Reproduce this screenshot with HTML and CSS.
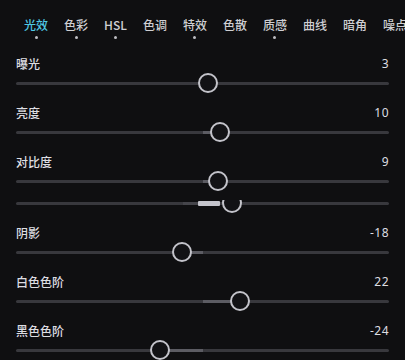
FILE: index.html
```html
<!DOCTYPE html>
<html lang="zh">
<head>
<meta charset="utf-8">
<link rel="stylesheet" href="styles.css">
</head>
<body>
<div class="app">
  <nav class="tabs">
    <div class="tab active"><span class="tab-label">光效</span><span class="dot"></span></div>
    <div class="tab"><span class="tab-label">色彩</span><span class="dot"></span></div>
    <div class="tab"><span class="tab-label">HSL</span><span class="dot"></span></div>
    <div class="tab"><span class="tab-label">色调</span><span class="dot hidden"></span></div>
    <div class="tab"><span class="tab-label">特效</span><span class="dot"></span></div>
    <div class="tab"><span class="tab-label">色散</span><span class="dot hidden"></span></div>
    <div class="tab"><span class="tab-label">质感</span><span class="dot"></span></div>
    <div class="tab"><span class="tab-label">曲线</span><span class="dot hidden"></span></div>
    <div class="tab"><span class="tab-label">暗角</span><span class="dot hidden"></span></div>
    <div class="tab"><span class="tab-label">噪点</span><span class="dot hidden"></span></div>
  </nav>

  <div class="list">
    <div class="row">
      <div class="head"><span class="label">曝光</span><span class="value">3</span></div>
      <div class="slider"><div class="track"><div class="knob" style="left:51.47%"></div></div></div>
    </div>

    <div class="row">
      <div class="head"><span class="label">亮度</span><span class="value">10</span></div>
      <div class="slider"><div class="track"><div class="fill" style="left:50.13%;width:4.56%"></div><div class="knob" style="left:54.69%"></div></div></div>
    </div>

    <div class="row tight">
      <div class="head"><span class="label">对比度</span><span class="value">9</span></div>
      <div class="slider"><div class="track"><div class="fill" style="left:50.13%;width:4.03%"></div><div class="knob" style="left:54.16%"></div></div></div>
    </div>

    <div class="row ghost">
      <div class="slider"><div class="track"><div class="fill faint" style="left:44.77%;width:4.03%"></div><div class="fill strong" style="left:48.8%;width:5.9%"></div><div class="knob clipped" style="left:57.9%"></div></div></div>
    </div>

    <div class="row">
      <div class="head"><span class="label">阴影</span><span class="value">-18</span></div>
      <div class="slider"><div class="track"><div class="fill" style="left:44.5%;width:5.63%"></div><div class="knob" style="left:44.5%"></div></div></div>
    </div>

    <div class="row">
      <div class="head"><span class="label">白色色阶</span><span class="value">22</span></div>
      <div class="slider"><div class="track"><div class="fill" style="left:50.13%;width:9.92%"></div><div class="knob" style="left:60.05%"></div></div></div>
    </div>

    <div class="row">
      <div class="head"><span class="label">黑色色阶</span><span class="value">-24</span></div>
      <div class="slider"><div class="track"><div class="fill" style="left:38.6%;width:11.53%"></div><div class="knob" style="left:38.6%"></div></div></div>
    </div>
  </div>
</div>
</body>
</html>
```

FILE: styles.css
```css
* { box-sizing: border-box; }
html, body {
  margin: 0;
  padding: 0;
  background: #0f0f11;
  width: 405px;
  height: 360px;
  overflow: hidden;
}
.app {
  font-family: "Noto Sans CJK SC", "Noto Sans", sans-serif;
  color: #dcdcdf;
  font-size: 12px;
}
.tabs {
  display: flex;
  gap: 16px;
  padding: 17px 0 0 24px;
  white-space: nowrap;
  overflow: hidden;
  height: 56px;
}
.tab {
  display: flex;
  flex-direction: column;
  align-items: center;
  flex: none;
}
.tab-label {
  line-height: 16px;
  font-size: 12px;
  font-weight: 500;
  color: #cfcfd3;
}
.tab.active .tab-label { color: #4fc9e4; }
.dot {
  width: 3px;
  height: 3px;
  border-radius: 50%;
  background: #bdbdc2;
  margin-top: 3px;
}
.dot.hidden { visibility: hidden; }

.list {
  padding: 0 16px;
}
.row {
  margin-bottom: 11px;
}
.row.tight { margin-bottom: 0; }
.head {
  display: flex;
  justify-content: space-between;
  line-height: 16px;
  height: 16px;
}
.label {
  font-size: 12px;
  color: #dedee2;
  font-weight: 500;
}
.value {
  font-family: "Noto Sans", sans-serif;
  font-size: 12px;
  color: #dedee2;
  letter-spacing: 0.5px;
}
.slider {
  height: 22px;
  display: flex;
  align-items: center;
}
.track {
  position: relative;
  width: 100%;
  height: 3px;
  border-radius: 2px;
  background: #38383d;
}
.fill {
  position: absolute;
  top: 0;
  height: 3px;
  background: #5c5c63;
}
.fill.faint { background: #45454b; }
.fill.strong {
  top: -1px;
  height: 5px;
  border-radius: 1px;
  background: #c4c4cc;
}
.knob {
  position: absolute;
  top: 50%;
  width: 20px;
  height: 20px;
  margin: -10px 0 0 -10px;
  border: 2px solid #c3c3ca;
  border-radius: 50%;
  background: #121215;
}
.knob.clipped {
  clip-path: inset(7px 0 0 0);
}
```
